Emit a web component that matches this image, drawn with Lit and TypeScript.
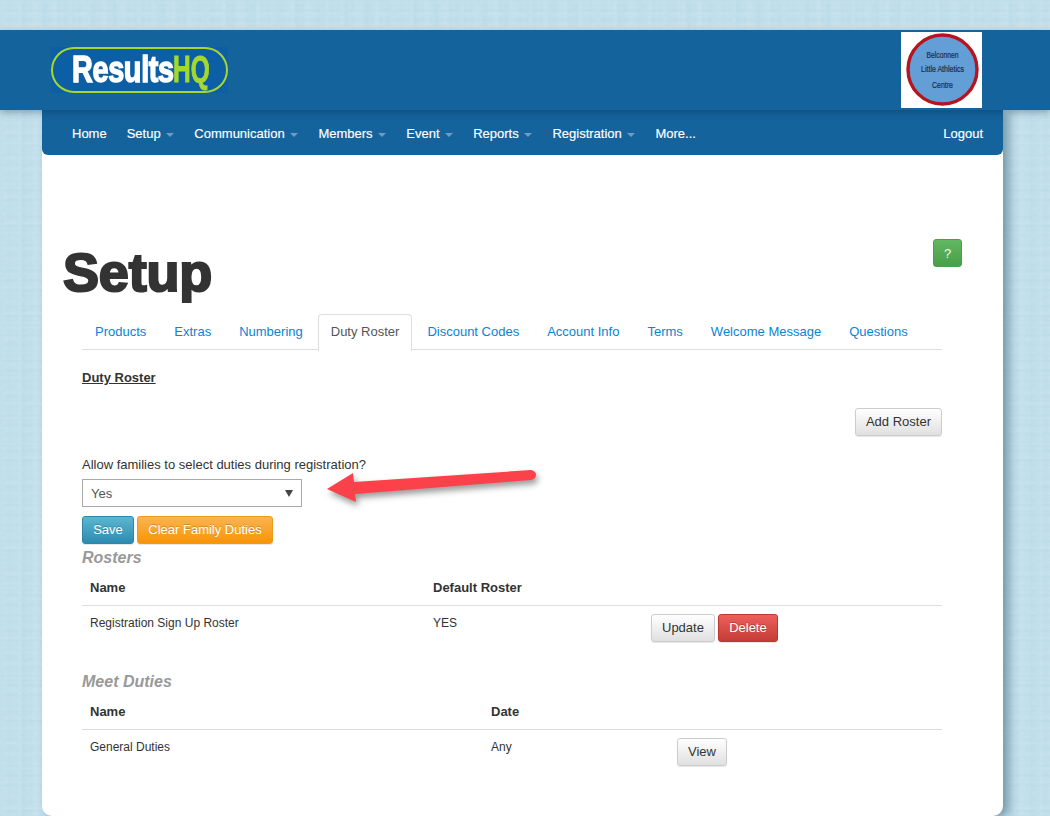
import { LitElement, html, css, svg } from "lit";
import { customElement } from "lit/decorators.js";

const NAV = [
  ["Home", false], ["Setup", true], ["Communication", true], ["Members", true],
  ["Event", true], ["Reports", true], ["Registration", true], ["More...", false],
] as const;
const TABS = ["Products", "Extras", "Numbering", "Duty Roster", "Discount Codes", "Account Info", "Terms", "Welcome Message", "Questions"];

@customElement("app-root")
export class AppRoot extends LitElement {
  static styles = css`
    :host { display: block; height: 816px; overflow: hidden; position: relative;
      font-family: "Liberation Sans", Arial, sans-serif; font-size: 13px; color: #333;
      background-color: #c0deeb;
      background-image:
        radial-gradient(ellipse at 50% 100%, rgba(255,255,255,.06) 0 40%, transparent 70%),
        radial-gradient(circle at 30% 30%, rgba(110,160,185,.04) 0 30%, transparent 60%),
        radial-gradient(ellipse at 60% 40%, rgba(255,255,255,.05) 0 35%, transparent 60%);
      background-size: 23px 9px, 17px 13px, 7px 5px;
      background-position: 0 0, 5px 3px, 2px 1px;
      padding-top: 30px; box-sizing: border-box; }
    * { box-sizing: border-box; }
    .top { height: 80px; background: #15639d; display: flex; justify-content: space-between; align-items: center; padding: 0 68px 0 51px; position: relative; z-index: 2; box-shadow: 0 3px 7px rgba(0,40,70,.3); }
    .logo { width: 177px; height: 46px; background: #0d5fa5; }
    .pill { width: 100%; height: 100%; border: 2px solid #a5d82f; border-radius: 23px; display: flex; align-items: center; padding-left: 19px;
      font-size: 36px; font-weight: 700; line-height: 1; }
    .w { display: inline-block; white-space: nowrap; transform-origin: left center; }
    .wa { width: 101px; color: #fff; } .wa .w { transform: scaleX(.8); -webkit-text-stroke: 1.5px #fff; letter-spacing: -.4px; }
    .wb { width: 36px; color: #a5d82f; } .wb .w { transform: scaleX(.68); -webkit-text-stroke: .9px #a5d82f; }
    .badge { width: 81px; height: 76px; background: #fff; display: block; }
    .wrap { width: 961px; margin-left: 42px; position: relative; border-radius: 0 0 10px 10px; height: 706px; background: #fff; box-shadow: 6px 2px 8px rgba(50,90,110,.5); }
    .nav { height: 45px; background: #15639d; border-radius: 0 0 6px 6px; display: flex; align-items: center; padding: 2px 20px 0 30px; color: #fff; font-size: 13px; -webkit-text-stroke: .15px #fff; }
    .nav .item { display: flex; align-items: center; margin-right: 20px; }
    .nav .caret { width: 0; height: 0; border: 4px solid transparent; border-top-color: #6f9cc0; border-bottom: 0; margin: 2px .7px 0 5px; }
    .nav .sp { flex: 1; }
    .nav .item.last { margin-right: 0; }
    .body { padding: 84px 61px 0 40px; position: relative; }
    .head { display: flex; justify-content: space-between; margin-left: -19px; margin-right: -20px; height: 75px; align-items: flex-start; }
    h1 { margin: 0; font-size: 54px; line-height: 67px; font-weight: 700; color: #333; -webkit-text-stroke: 2.2px #333; letter-spacing: -.2px; }
    .help { width: 29px; height: 28px; border-radius: 3px; border: 1px solid #4a9f4a; background: linear-gradient(#62b862, #489f48); color: #eef8ee; display: flex; align-items: center; justify-content: center; font-size: 13px; }
    .tabs { display: flex; border-bottom: 1px solid #ddd; height: 36px; }
    .tab { padding: 8px 12px 0; height: 36px; color: #0b83d3; margin-right: 2px; border: 1px solid transparent; border-bottom: 0; line-height: 17px; }
    .tab.on { background: #fff; color: #555; border-color: #ddd; border-radius: 4px 4px 0 0; height: 37px; }
    .sub { font-weight: 700; text-decoration: underline; margin-top: 20px; line-height: 15px; color: #333; }
    .right { display: flex; justify-content: flex-end; margin-top: 23px; }
    .btn { display: inline-flex; align-items: center; justify-content: center; height: 28px; padding: 0 10px 2px; border-radius: 3px; font-size: 13px; border: 1px solid #ccc; color: #333; background: linear-gradient(#fff, #e0e0e0); box-shadow: 0 1px 1px rgba(0,0,0,.1); }
    .btn.save { background: linear-gradient(#5bb7d1, #2d8bb0); border-color: #2f86a8; color: #fff; width: 52px; padding: 0 0 1px; text-shadow: 0 -1px 0 rgba(0,0,0,.2); }
    .btn.warn { background: linear-gradient(#fbb450, #f89406); border-color: #ee9a1c; color: #fff; width: 136px; padding: 0 0 1px; text-shadow: 0 -1px 0 rgba(0,0,0,.2); }
    .btn.del { background: linear-gradient(#ee5f5b, #c43c35); border-color: #bd362f; color: #fff; width: 60px; padding: 0 0 1px; text-shadow: 0 -1px 0 rgba(0,0,0,.2); }
    .lbl { margin-top: 21px; line-height: 15px; }
    .sel { margin-top: 7px; width: 220px; height: 28px; border: 1px solid #aaa; display: flex; align-items: center; justify-content: space-between; padding: 0 8px; color: #555; }
    .sel i { width: 0; height: 0; border: 4px solid transparent; border-top: 7px solid #444; border-bottom: 0; }
    .acts { display: flex; gap: 3px; margin-top: 9px; }
    h4 { margin: 5px 0 0; font-size: 16px; line-height: 18px; font-weight: 700; font-style: italic; color: #999; }
    .tr { display: grid; padding: 0 8px; align-items: center; }
    .tr.h { height: 39px; border-bottom: 1px solid #ddd; font-weight: 700; padding-top: 3px; }
    .t1 { grid-template-columns: 343px 218px 1fr; }
    .t2 { grid-template-columns: 401px 186px 1fr; }
    .tr.r { height: 36px; font-size: 12px; align-items: start; padding-top: 8px; }
    .tr.r .txt { line-height: 17px; padding-top: 1px; }
    .tr.r .b { display: flex; gap: 3px; }
    h4.m { margin-top: 31px; }
    .arrow { position: absolute; left: 0; top: 0; pointer-events: none; overflow: visible; filter: drop-shadow(2px 4px 3px rgba(0,0,0,.4)); }
  `;

  render() {
    return html`
      <div class="top">
        <div class="logo"><div class="pill">
          <span class="wa"><span class="w">Results</span></span><span class="wb"><span class="w">HQ</span></span>
        </div></div>
        <svg class="badge" viewBox="0 0 81 76" role="img">
          <circle cx="41.5" cy="37.5" r="34.5" fill="#639ed6" stroke="#b4151f" stroke-width="3.4"/>
          <g font-family="Liberation Sans, sans-serif" fill="#1d2c4a" stroke="#1d2c4a" stroke-width=".2" text-anchor="middle">
            ${svg`<text x="41.5" y="26" font-size="9" textLength="32" lengthAdjust="spacingAndGlyphs">Belconnen</text>
            <text x="41.5" y="40" font-size="8.5" textLength="43" lengthAdjust="spacingAndGlyphs">Little Athletics</text>
            <text x="41.5" y="56" font-size="9" textLength="21" lengthAdjust="spacingAndGlyphs">Centre</text>`}
          </g>
        </svg>
      </div>
      <div class="wrap">
        <div class="nav">
          ${NAV.map(([t, c], i) => html`<div class="item ${i === 7 ? "last" : ""}">${t}${c ? html`<span class="caret"></span>` : ""}</div>`)}
          <span class="sp"></span>
          <div class="item last">Logout</div>
        </div>
        <div class="body">
          <div class="head"><h1>Setup</h1><div class="help">?</div></div>
          <div class="tabs">
            ${TABS.map((t) => html`<div class="tab ${t === "Duty Roster" ? "on" : ""}">${t}</div>`)}
          </div>
          <div class="sub">Duty Roster</div>
          <div class="right"><span class="btn">Add Roster</span></div>
          <div class="lbl">Allow families to select duties during registration?</div>
          <div class="sel"><span>Yes</span><i></i></div>
          <div class="acts"><span class="btn save">Save</span><span class="btn warn">Clear Family Duties</span></div>
          <h4>Rosters</h4>
          <div class="tr h t1"><span>Name</span><span>Default Roster</span></div>
          <div class="tr r t1"><span class="txt">Registration Sign Up Roster</span><span class="txt">YES</span>
            <span class="b"><span class="btn">Update</span><span class="btn del">Delete</span></span></div>
          <h4 class="m">Meet Duties</h4>
          <div class="tr h t2"><span>Name</span><span>Date</span></div>
          <div class="tr r t2"><span class="txt">General Duties</span><span class="txt">Any</span>
            <span class="b"><span class="btn">View</span></span></div>
        </div>
        <svg class="arrow" width="961" height="706" viewBox="42 110 961 706">
          <path d="M327 489 L353 473 L354 482 L531 470 Q536 471 536 475 Q536 479 531 480 L355 494 L356 502 Z" fill="#fb4149"/>
        </svg>
      </div>
    `;
  }
}
